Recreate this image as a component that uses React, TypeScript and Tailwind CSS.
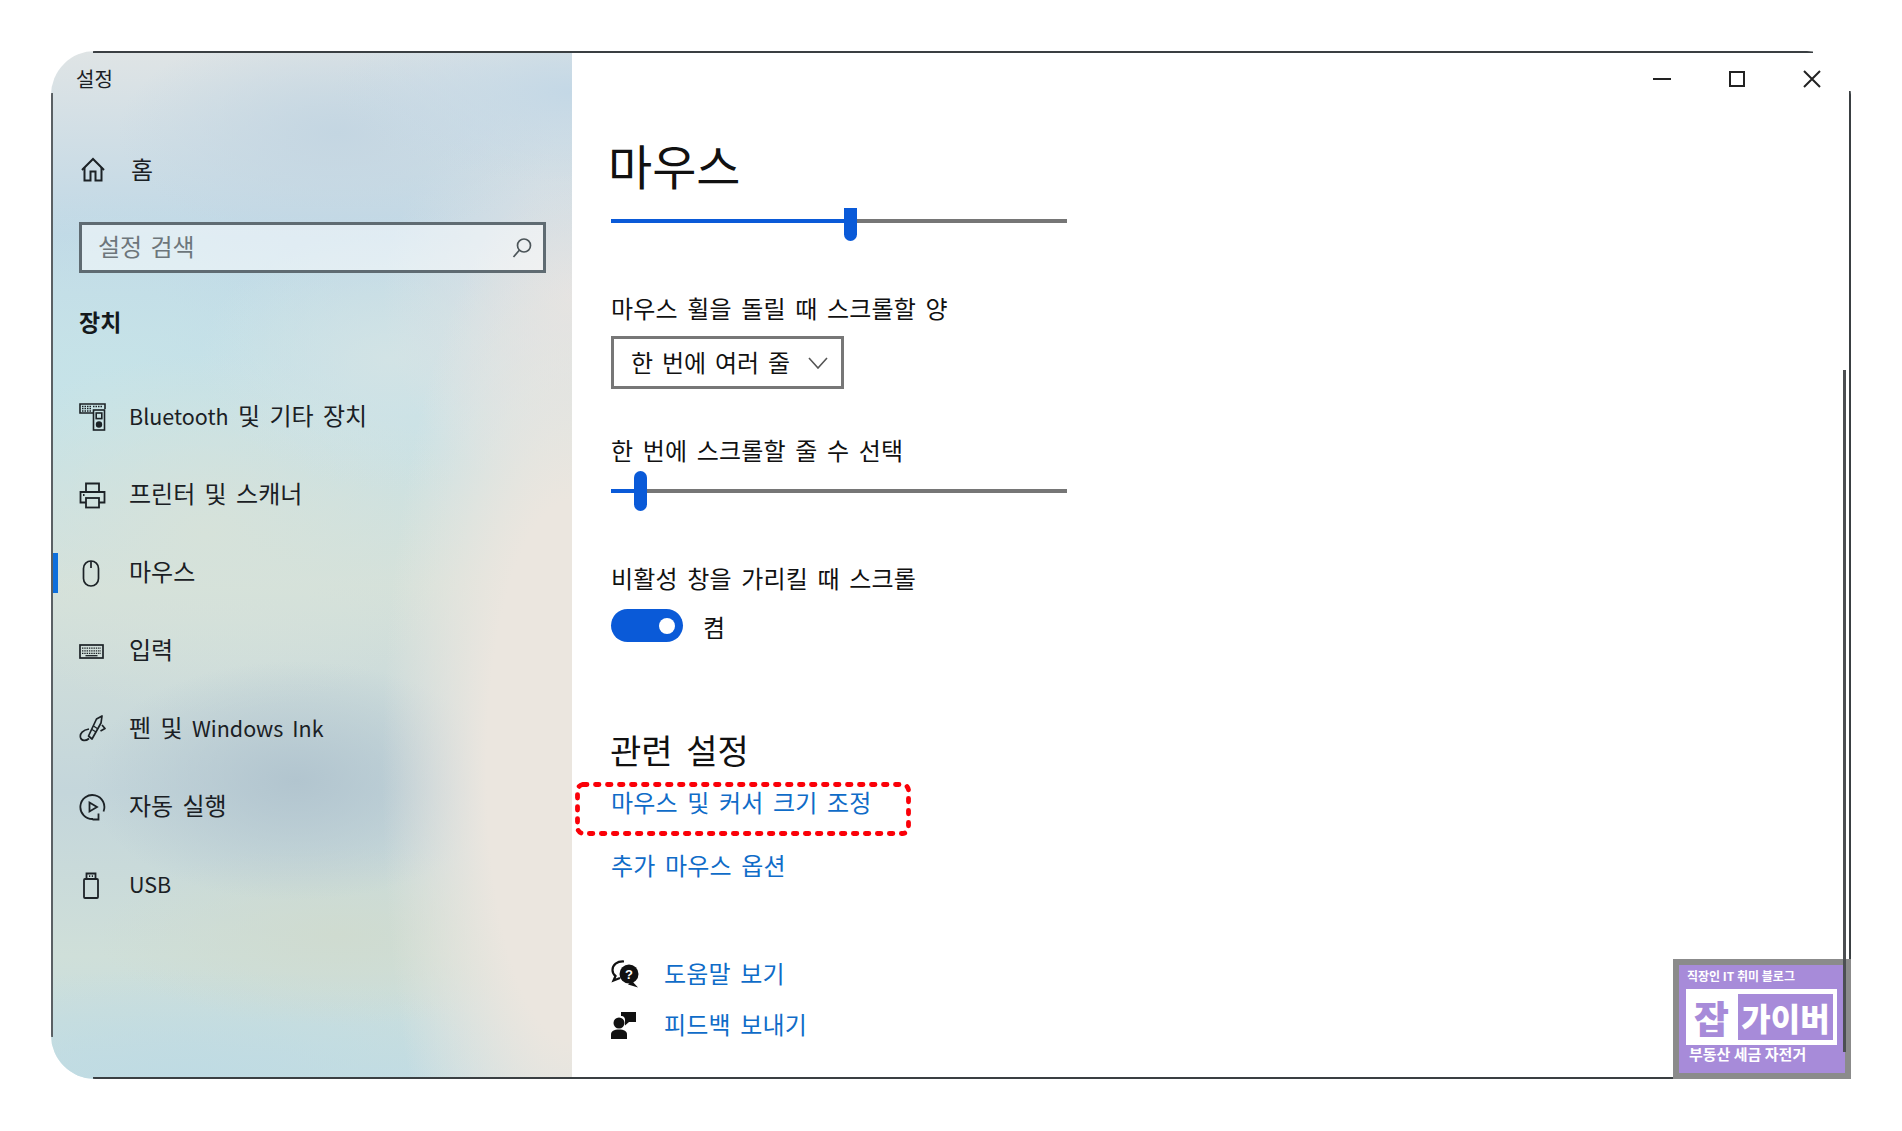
import React from "react";

const S = "[font-family:'Noto_Sans_CJK_KR','Noto_Sans',sans-serif]";

function Home() {
  return (
    <svg width="24" height="26" viewBox="0 0 24 26" fill="none" stroke="#1c2226" strokeWidth="2">
      <path d="M1 13 12 2 23 13" />
      <path d="M3.5 10.5V23.5H9.5V14.5H14.5V23.5H20.5V10.5" />
    </svg>
  );
}
function BtIcon() {
  return (
    <svg width="27" height="28" viewBox="0 0 27 28" fill="none" stroke="#1c2226" strokeWidth="1.6">
      <path d="M14 10H1V1H26V6" />
      <path d="M3 3.5H12M3 5.7H12M3 8H12M14 3.5H24" strokeDasharray="1.5 1" strokeWidth="1.3" />
      <rect x="14.5" y="7" width="11" height="20" />
      <rect x="17.2" y="10" width="5.6" height="5.6" />
      <circle cx="20" cy="21.5" r="2.4" fill="#1c2226" />
    </svg>
  );
}
function PrinterIcon() {
  return (
    <svg width="27" height="27" viewBox="0 0 27 27" fill="none" stroke="#1c2226" strokeWidth="1.8">
      <path d="M7 10V1.5H20V10" />
      <path d="M7 20.5H1.5V10H25.5V20.5H20" />
      <rect x="7" y="16" width="13" height="9.5" />
      <path d="M4 13H5.5" />
    </svg>
  );
}
function MouseIcon() {
  return (
    <svg width="18" height="27" viewBox="0 0 18 27" fill="none" stroke="#1c2226" strokeWidth="1.7">
      <rect x="1.5" y="1" width="15" height="25" rx="7.5" />
      <path d="M9 1V8" />
    </svg>
  );
}
function KeyboardIcon() {
  return (
    <svg width="25" height="15" viewBox="0 0 25 15" fill="none" stroke="#1c2226" strokeWidth="1.7">
      <rect x="1" y="1" width="23" height="13" />
      <path d="M3 4.2H22M3 6.8H22M3 9.4H22" strokeDasharray="1.4 0.9" strokeWidth="1.3" />
      <path d="M6.5 11.7H18.5" strokeWidth="1.3" />
    </svg>
  );
}
function PenIcon() {
  return (
    <svg width="27" height="28" viewBox="0 0 27 28" fill="none" stroke="#1c2226" strokeWidth="1.7" strokeLinejoin="round">
      <path d="M17.5 4 23 1 22 8 13 24 9.500 21Z" />
      <path d="M14.500 11 19 14M13 14.500 17 17" strokeWidth="1.300" />
      <path d="M23 10 26 13.500 21.500 16" />
      <path d="M10 14C4 15 0.500 18.500 1.500 22.500 2.500 26 6.500 26.500 10 23.500" />
    </svg>
  );
}
function AutoIcon() {
  return (
    <svg width="27" height="27" viewBox="0 0 27 27" fill="none" stroke="#1c2226" strokeWidth="1.800">
      <path d="M24.500 17.500A12 12 0 1 0 14 25" />
      <path d="M13.500 25.500H19.500V19.500" />
      <path d="M10.500 8.500 18 13 10.500 17.500Z" />
    </svg>
  );
}
function UsbIcon() {
  return (
    <svg width="16" height="27" viewBox="0 0 16 27" fill="none" stroke="#1c2226" strokeWidth="1.800">
      <path d="M3.500 7V1.500H12.500V7" />
      <rect x="1" y="7" width="14" height="19" rx="1" />
      <path d="M6 4.200H7.200M8.800 4.200H10" />
    </svg>
  );
}
function SearchIcon() {
  return (
    <svg width="20" height="22" viewBox="0 0 20 22" fill="none" stroke="#4c5559" strokeWidth="1.7">
      <circle cx="12" cy="8.500" r="6.500" />
      <path d="M7.500 13 1.500 20" />
    </svg>
  );
}
function HelpIcon() {
  return (
    <svg width="28" height="28" viewBox="0 0 28 28">
      <path d="M13 1.500C6 1 1.500 5 1.500 10c0 2.500 1 4.500 3 6L2.500 20.500l6.500-2.500" fill="none" stroke="#111" strokeWidth="2.200" />
      <circle cx="18" cy="14" r="9.500" fill="#111" />
      <path d="M21 21l6 6.500-10-3Z" fill="#111" />
      <text x="18" y="19" textAnchor="middle" fontSize="13" fontWeight="700" fill="#fff" fontFamily="'Liberation Sans',sans-serif">?</text>
    </svg>
  );
}
function FeedbackIcon() {
  return (
    <svg width="26" height="27" viewBox="0 0 26 27" fill="#111">
      <circle cx="8" cy="11" r="5.500" />
      <path d="M0 27V22.500C0 19 3 17.500 8 17.500S16 19 16 22.500V27Z" />
      <path d="M10 0H25V10H18L14 13.500V7.500C14 5 12 4 10 4Z" />
    </svg>
  );
}

function NavItem({ icon, children, active }: { icon: React.ReactNode; children: React.ReactNode; active?: boolean }) {
  return (
    <div className="relative flex h-[78px] items-center pl-[28px]">
      {active && <div className="absolute left-0 top-[19px] h-[40px] w-[7px] bg-[#0e6fdc]" />}
      <div className="flex w-[50px] items-center justify-start">{icon}</div>
      <span className="pb-[4px] text-[24px] leading-[30px] text-[#1a2024] [word-spacing:4px]">{children}</span>
    </div>
  );
}

function Slider({ pct, rounded }: { pct: number; rounded: boolean }) {
  return (
    <div className="relative flex h-[36px] w-[456px] items-center">
      <div className="h-[4px] w-full bg-[#767676]" />
      <div className="absolute left-0 top-[16px] h-[4px] bg-[#0a5ad8]" style={{ width: `${pct}px` }} />
      <div
        className={
          rounded
            ? "absolute top-[-2px] h-[40px] w-[13px] rounded-full bg-[#0a5ad8]"
            : "absolute top-[5px] h-[33px] w-[13px] rounded-b-full bg-[#0a5ad8]"
        }
        style={{ left: `${pct}px` }}
      />
    </div>
  );
}

const label = "flex h-[30px] items-center pb-[3px] text-[24px] tracking-[0.15px] [word-spacing:4px]";

export default function App() {
  return (
    <div className={`relative h-[1131px] w-[1902px] overflow-hidden bg-white pl-[51px] pt-[51px] ${S}`}>
      <div className="relative flex h-[1028px] w-[1800px] overflow-hidden rounded-[44px] bg-white">
        <aside className="relative w-[521px] shrink-0 bg-[radial-gradient(ellipse_190px_600px_at_100%_70%,#ebe6df_0%,#ebe6df_45%,transparent_100%),radial-gradient(ellipse_210px_120px_at_47%_71%,#b2c5cf_0%,transparent_100%),radial-gradient(ellipse_240px_90px_at_100%_4%,#c4d8e6_0%,transparent_100%),radial-gradient(ellipse_220px_110px_at_55%_8%,#c4d6e2_0%,transparent_100%),radial-gradient(ellipse_190px_200px_at_100%_24%,#e2e2e3_0%,transparent_100%),radial-gradient(ellipse_190px_130px_at_65%_30%,#d2e3e5_0%,transparent_100%),radial-gradient(ellipse_260px_180px_at_30%_47%,#d6e2da_0%,transparent_100%),radial-gradient(ellipse_240px_90px_at_55%_86%,#cfdbd0_0%,transparent_100%),radial-gradient(ellipse_380px_110px_at_25%_100%,#bfdbe3_0%,transparent_100%),radial-gradient(ellipse_280px_200px_at_10%_33%,#c6e3e8_0%,transparent_100%),linear-gradient(180deg,#dfe4e5_0%,#c0d8e6_18%,#c6e1e7_35%,#d5e1da_52%,#c4d6db_72%,#cfdfd9_88%,#c4dde2_100%)]">
          <div className="flex h-[56px] items-center pb-[1px] pl-[25px] text-[20px] text-[#1a2024]">설정</div>
          <div className="mt-[43px] flex h-[40px] items-center pl-[30px]">
            <div className="w-[50px]"><Home /></div>
            <span className="pb-[3px] text-[24px] text-[#1a2024]">홈</span>
          </div>
          <div className="ml-[28px] mt-[32px] flex h-[51px] w-[467px] items-center justify-between border-[3px] border-[#5f6b72] bg-white/50 pl-[16px] pr-[11px]">
            <span className="pb-[3px] text-[24px] text-[#6d767b] [word-spacing:3px]">설정 검색</span>
            <SearchIcon />
          </div>
          <div className="mt-[35px] flex h-[30px] items-center pb-[3px] pl-[28px] text-[23px] font-bold text-[#14191c]">장치</div>
          <div className="mt-[40px]">
            <NavItem icon={<BtIcon />}><span className="text-[21.500px]">Bluetooth</span> 및 기타 장치</NavItem>
            <NavItem icon={<PrinterIcon />}>프린터 및 스캐너</NavItem>
            <NavItem icon={<div className="pl-[3px]"><MouseIcon /></div>} active>마우스</NavItem>
            <NavItem icon={<KeyboardIcon />}>입력</NavItem>
            <NavItem icon={<PenIcon />}>펜 및 <span className="text-[21.500px]">Windows Ink</span></NavItem>
            <NavItem icon={<AutoIcon />}>자동 실행</NavItem>
            <NavItem icon={<div className="pl-[4px]"><UsbIcon /></div>}><span className="text-[21.500px]">USB</span></NavItem>
          </div>
        </aside>

        <main className="flex-1 pl-[39px] text-[#111]">
          <div className="relative flex h-[56px] items-center justify-end gap-[58px] pr-[30px]">
            <svg width="18" height="2" viewBox="0 0 18 2"><path d="M0 1H18" stroke="#222" strokeWidth="2" /></svg>
            <svg width="16" height="16" viewBox="0 0 16 16" fill="none"><rect x="1" y="1" width="14" height="14" stroke="#222" strokeWidth="2" /></svg>
            <svg width="18" height="18" viewBox="0 0 18 18" fill="none"><path d="M1 1 17 17M17 1 1 17" stroke="#222" strokeWidth="2" /></svg>
          </div>
          <h1 className="-ml-[3px] mt-[33px] flex h-[52px] items-center pb-[4px] text-[48px] font-normal leading-[52px]">마우스</h1>
          <div className="mt-[11px]"><Slider pct={233} rounded={false} /></div>
          <div className={`mt-[55px] ${label}`}>마우스 휠을 돌릴 때 스크롤할 양</div>
          <div className="mt-[12px] flex h-[53px] w-[233px] items-center justify-between border-[3px] border-[#777] pl-[17px] pr-[13px] text-[24px] [word-spacing:3.500px]">
            <span className="pb-[2px]">한 번에 여러 줄</span>
            <svg width="20" height="12" viewBox="0 0 20 12" fill="none"><path d="M1 1 10 11 19 1" stroke="#555" strokeWidth="1.600" /></svg>
          </div>
          <div className={`mt-[47px] ${label}`}>한 번에 스크롤할 줄 수 선택</div>
          <div className="mt-[7px]"><Slider pct={23} rounded /></div>
          <div className={`mt-[55px] ${label}`}>비활성 창을 가리킬 때 스크롤</div>
          <div className="mt-[15px] flex h-[33px] items-center">
            <div className="flex h-[33px] w-[72px] items-center justify-end rounded-full bg-[#0a5ad8] pr-[8px]">
              <div className="h-[16px] w-[16px] rounded-full bg-white" />
            </div>
            <span className="ml-[20px] pt-[2px] text-[24px]">켬</span>
          </div>
          <h2 className="-ml-[1px] mt-[89px] flex h-[40px] items-center pb-[3px] text-[34px] font-normal [word-spacing:6px]">관련 설정</h2>
          <div className={`relative mt-[17px] text-[#0f6cc8] ${label}`}>
            마우스 및 커서 크기 조정
            <svg className="absolute left-[-36px] top-[-6px]" width="336" height="54" viewBox="0 0 336 54" fill="none">
              <rect x="2.500" y="2.500" width="331" height="49" rx="6" stroke="#fa0008" strokeWidth="4.800" strokeDasharray="3.500 8.500" strokeLinecap="round" />
            </svg>
          </div>
          <div className={`mt-[33px] text-[#0f6cc8] ${label}`}>추가 마우스 옵션</div>
          <div className={`mt-[78px] text-[#0f6cc8] ${label}`}>
            <div className="w-[53px] pt-[3px]"><HelpIcon /></div>
            도움말 보기
          </div>
          <div className={`mt-[21px] text-[#0f6cc8] ${label}`}>
            <div className="w-[53px] pt-[3px]"><FeedbackIcon /></div>
            피드백 보내기
          </div>
        </main>

        {/* window edge lines */}
        <div className="absolute left-[42px] right-[38px] top-0 h-[1.5px] bg-[#3a3f42]" />
        <div className="absolute left-[42px] right-[38px] bottom-0 h-[2px] bg-[#3a3f42]" />
        <div className="absolute bottom-[42px] left-0 top-[42px] w-[1.5px] bg-[#5a6064]" />
        <div className="absolute bottom-[42px] right-0 top-[40px] w-[2px] bg-[#3a3f42]" />
      </div>

      {/* watermark */}
      <div className="absolute left-[1673px] top-[959px] h-[120px] w-[178px] border-[6px] border-[#8b8b8b] bg-[#a78bd9] font-bold text-white">
        <div className="ml-[8px] mt-[3px] text-[12px] leading-[16px]">직장인 IT 취미 블로그</div>
        <div className="ml-[7px] mt-[5px] flex h-[56px] w-[151px] items-center bg-white pl-[8px] pr-[4px]">
          <span className="w-[44px] text-[38px] font-black leading-[40px] text-[#a78bd9]">잡</span>
          <div className="flex h-[46px] flex-1 items-center justify-center bg-[#a78bd9] text-[32px] font-black leading-[40px]">가이버</div>
        </div>
        <div className="ml-[10px] text-[15px] leading-[18px]">부동산 세금 자전거</div>
      </div>

      {/* scrollbar, drawn over the watermark's edge as in the picture */}
      <div className="absolute left-[1843px] top-[370px] h-[682px] w-[3px] bg-[#4c4f52]" />
    </div>
  );
}
